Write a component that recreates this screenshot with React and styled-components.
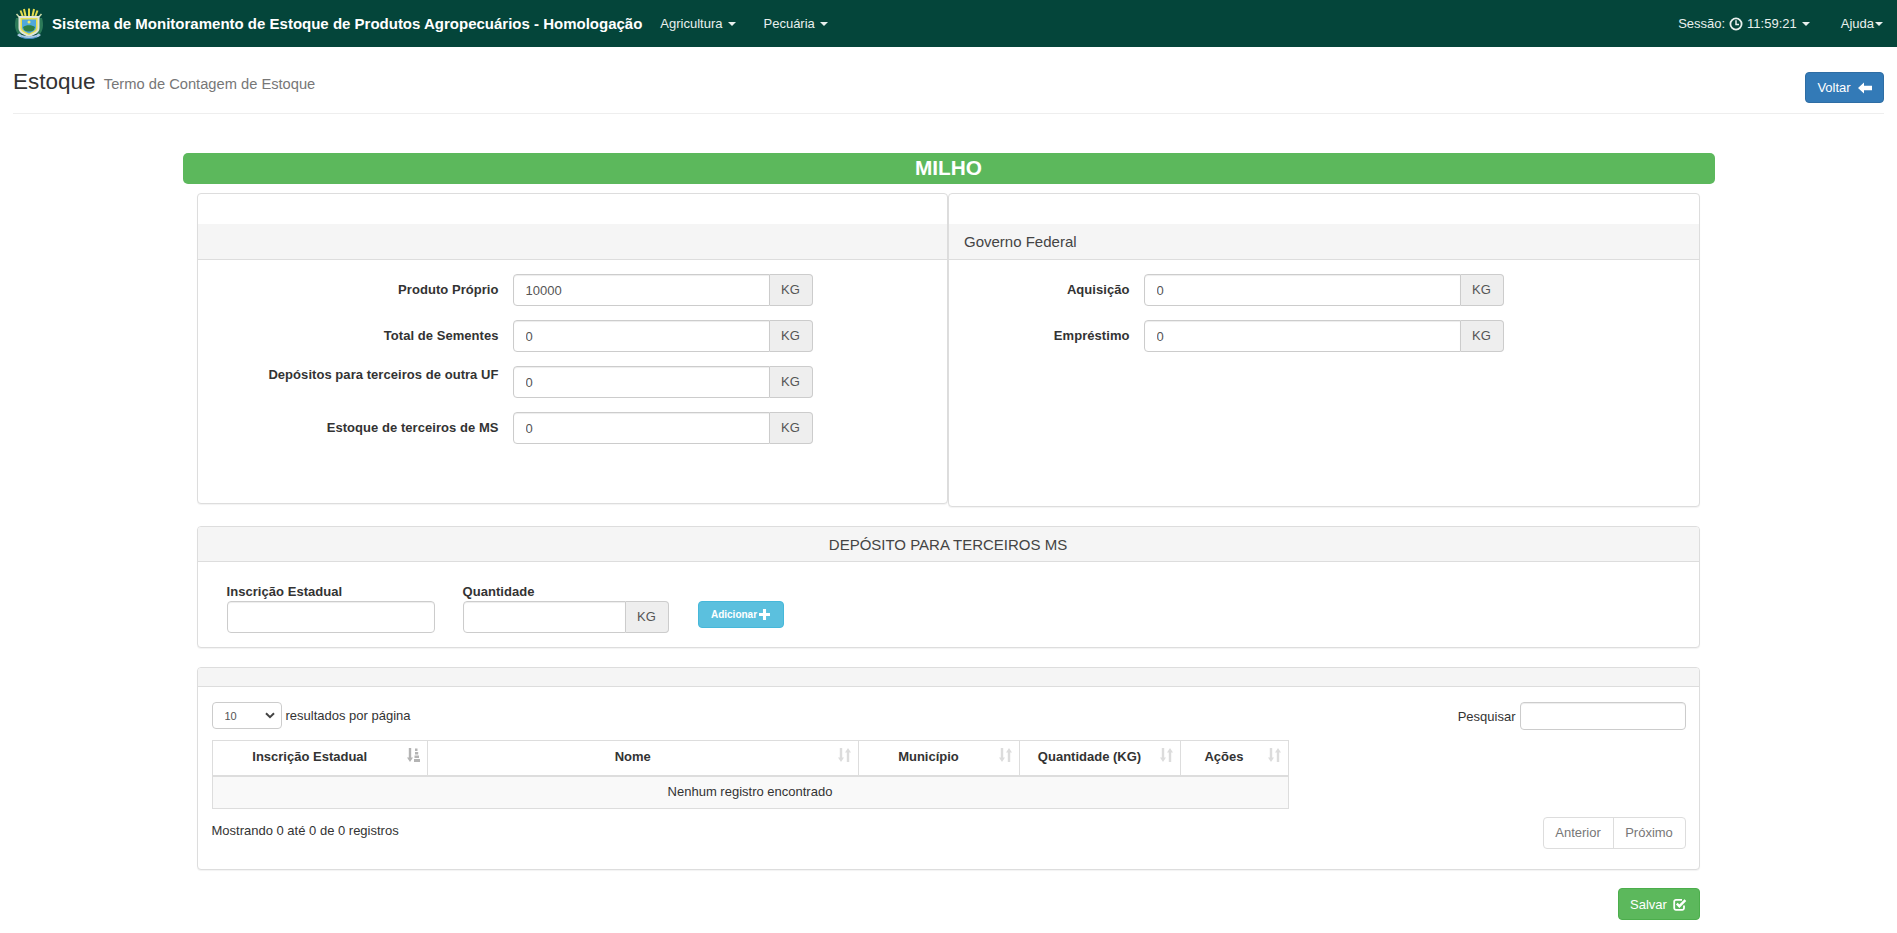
import React from 'react';
import styled, { createGlobalStyle } from 'styled-components';

const GlobalStyle = createGlobalStyle`
  html, body {
    margin: 0;
    padding: 0;
    background: #fff;
  }
  body {
    font-family: "Liberation Sans", Arial, sans-serif;
    font-size: 13px;
    color: #333;
  }
  * {
    box-sizing: border-box;
  }
`;

const Navbar = styled.nav`
  display: flex;
  align-items: center;
  height: 47px;
  padding: 0 14px 0 14px;
  background: #04453a;
  color: #fff;
`;

const Brand = styled.div`
  margin-left: 8px;
  font-size: 15px;
  font-weight: 700;
  white-space: nowrap;
`;

const NavItem = styled.div`
  display: flex;
  align-items: center;
  gap: ${props => props.$gap ?? 4}px;
  margin-left: ${props => props.$left || 0}px;
  font-size: 13px;
  color: #e9f0ee;
  white-space: nowrap;
`;

const Caret = styled.span`
  display: inline-block;
  width: 0;
  height: 0;
  margin-left: 1px;
  border-top: 4px solid currentColor;
  border-left: 4px solid transparent;
  border-right: 4px solid transparent;
`;

const NavRight = styled.div`
  display: flex;
  align-items: center;
  margin-left: auto;
`;

const PageHeader = styled.header`
  display: flex;
  justify-content: space-between;
  margin: 0 13px;
  height: 67px;
  padding-top: 25px;
  border-bottom: 1px solid #eee;
`;

const Title = styled.h1`
  margin: -3px 0 0;
  font-size: 22.5px;
  font-weight: 400;
  line-height: 26px;
  color: #333;

  small {
    margin-left: 2px;
    font-size: 14.7px;
    color: #777;
  }
`;

const Button = styled.button`
  display: inline-flex;
  align-items: center;
  justify-content: center;
  gap: ${props => props.$gap || 6}px;
  width: ${props => props.$width}px;
  height: ${props => props.$height}px;
  padding: 0;
  border: 1px solid ${props => props.$border};
  border-radius: 4px;
  background: ${props => props.$bg};
  color: #fff;
  font-family: inherit;
  font-size: ${props => props.$size || 13}px;
  font-weight: ${props => props.$weight || 400};
`;

const Main = styled.main`
  width: 1532px;
  margin: 39px auto 0;
`;

const ProductBar = styled.div`
  height: 31px;
  border-radius: 5px;
  background: #5cb85c;
  color: #fff;
  font-size: 20.8px;
  font-weight: 700;
  line-height: 30px;
  text-align: center;
`;

const Content = styled.div`
  padding: 9px 15px 0 14px;
`;

const Columns = styled.div`
  display: grid;
  grid-template-columns: 1fr 1fr;
  align-items: start;
`;

const Panel = styled.section`
  height: ${props => (props.$height ? `${props.$height}px` : 'auto')};
  margin-bottom: ${props => props.$bottom || 0}px;
  border: 1px solid #ddd;
  border-radius: 4px;
  background: #fff;
  box-shadow: 0 1px 1px rgba(0, 0, 0, 0.05);
  overflow: hidden;
`;

const PanelSpacer = styled.div`
  height: 30px;
`;

const PanelHeading = styled.div`
  height: ${props => props.$height}px;
  padding: 0 15px;
  border-bottom: 1px solid #ddd;
  background: #f5f5f5;
  font-size: 15px;
  line-height: ${props => props.$height}px;
  text-align: ${props => props.$align || 'left'};
  color: #444;
`;

const FormBody = styled.div`
  padding-top: 14px;
`;

const FormRow = styled.div`
  display: grid;
  grid-template-columns: ${props => props.$labelWidth}px ${props => props.$fieldWidth}px;
  column-gap: 14px;
  align-items: center;
  margin-bottom: 14px;
`;

const RowLabel = styled.label`
  padding-top: ${props => (props.$top ? 1 : 0)}px;
  padding-bottom: ${props => (props.$top ? 0 : 2)}px;
  align-self: ${props => (props.$top ? 'start' : 'center')};
  font-size: 13px;
  font-weight: 700;
  letter-spacing: 0.05px;
  text-align: right;
`;

const InputGroup = styled.div`
  display: flex;
  height: ${props => props.$height || 32}px;
`;

const TextInput = styled.input`
  flex: 1;
  width: 100%;
  min-width: 0;
  height: ${props => props.$height || 32}px;
  padding: 0 12px;
  border: 1px solid #ccc;
  border-radius: ${props => (props.$joined ? '4px 0 0 4px' : '4px')};
  box-shadow: inset 0 1px 1px rgba(0, 0, 0, 0.075);
  background: #fff;
  color: #555;
  font-family: inherit;
  font-size: 13px;
`;

const Addon = styled.span`
  flex: 0 0 43px;
  border: 1px solid #ccc;
  border-left: 0;
  border-radius: 0 4px 4px 0;
  background: #eee;
  color: #555;
  font-size: 13px;
  line-height: 29px;
  text-align: center;
`;

const StockForm = styled.div`
  display: flex;
  align-items: flex-start;
  padding: 21px 0 14px 29px;
`;

const StackField = styled.div`
  width: ${props => props.$width}px;
  margin-right: ${props => props.$right || 0}px;
`;

const StackLabel = styled.label`
  display: block;
  height: 18px;
  font-size: 13px;
  font-weight: 700;
  letter-spacing: 0.05px;
  line-height: 17px;
`;

const AddWrap = styled.div`
  padding-top: 18px;
`;

const TableBody = styled.div`
  padding: 15px 13px 20px 14px;
`;

const TableTop = styled.div`
  display: flex;
  justify-content: space-between;
  align-items: flex-start;
  height: 38px;
`;

const LengthControl = styled.div`
  display: flex;
  align-items: center;
  gap: 4px;
  height: 27px;
  color: #333;
`;

const SelectWrap = styled.div`
  position: relative;
  display: flex;
`;

const LengthSelect = styled.select`
  width: 70px;
  height: 27px;
  padding: 0 6px 0 12px;
  border: 1px solid #ccc;
  border-radius: 4px;
  appearance: none;
  background: #fff;
  color: #555;
  font-family: inherit;
  font-size: 11px;
`;

const SelectChevron = styled.span`
  position: absolute;
  top: 10px;
  right: 7px;
  display: flex;
  color: #444;
  pointer-events: none;
`;

const SearchControl = styled.div`
  display: flex;
  align-items: center;
  gap: 4px;
`;

const SearchInput = styled(TextInput)`
  flex: none;
  width: 166px;
  height: 28px;
`;

const Table = styled.table`
  width: 1076px;
  table-layout: fixed;
  border-collapse: collapse;
  font-size: 13px;
`;

const HeadCell = styled.th`
  position: relative;
  width: ${props => props.$width}px;
  height: 35px;
  padding: 0 28px 3px 8px;
  border: 1px solid #ddd;
  border-bottom: 2px solid #ddd;
  color: #333;
  font-weight: 700;
  text-align: center;
`;

const SortMark = styled.span`
  position: absolute;
  top: 7px;
  right: 7px;
  display: flex;
  color: ${props => (props.$active ? '#b4b4b4' : '#dcdcdc')};
`;

const EmptyCell = styled.td`
  height: 33px;
  padding: 0 0 1px;
  border: 1px solid #ddd;
  background: #f9f9f9;
  text-align: center;
`;

const TableFoot = styled.div`
  display: flex;
  justify-content: space-between;
  align-items: flex-start;
  margin-top: 8px;
`;

const Info = styled.div`
  padding-top: 6px;
`;

const Pager = styled.div`
  display: flex;
  height: 32px;
  border: 1px solid #ddd;
  border-radius: 4px;
  background: #fff;
  color: #777;
  font-size: 13px;
  line-height: 30px;
`;

const PagerItem = styled.span`
  width: ${props => props.$width}px;
  text-align: center;
  & + & {
    border-left: 1px solid #ddd;
  }
`;

const Actions = styled.div`
  display: flex;
  justify-content: flex-end;
  margin-top: 18px;
`;

const Crest = () => (
  <svg width="30" height="32" viewBox="0 0 30 32">
    <g stroke="#e6de4e" strokeWidth="2">
      <path d="M15 8 L15 0.5" />
      <path d="M11.5 8 L10 1" />
      <path d="M18.5 8 L20 1" />
      <path d="M9 9 L6.5 2.5" />
      <path d="M21 9 L23.5 2.5" />
    </g>
    <g stroke="#c8d8a8" strokeWidth="1.6">
      <path d="M7 11 L2.5 6" />
      <path d="M23 11 L27.5 6" />
    </g>
    <path d="M2 10 C0 17 1 23 5 27 L8 25 C5 21 4.5 16 5.5 10 Z" fill="#2c7a58" />
    <path d="M28 10 C30 17 29 23 25 27 L22 25 C25 21 25.5 16 24.5 10 Z" fill="#2c7a58" />
    <path d="M4.5 8 H25.5 V20 C25.5 25 20 27 15 29 C10 27 4.5 25 4.5 20 Z" fill="#dfe6d8" />
    <path d="M6.5 10 H23.5 V20 C23.5 23.5 19 25 15 27 C11 25 6.5 23.5 6.5 20 Z" fill="#e6de4e" />
    <path d="M8 11.5 H22 V19.5 C22 22.5 18.5 24 15 25.5 C11.5 24 8 22.5 8 19.5 Z" fill="#4fa8dc" />
    <path d="M9 19 C12 16.5 18 16.5 21 19 L20 22 C17 24 13 24 10 22 Z" fill="#2f7f46" />
    <circle cx="15" cy="14" r="1.5" fill="#f2ea6a" />
    <path d="M3 27 C8 32 22 32 27 27 L24.5 25.5 C20 29 10 29 5.5 25.5 Z" fill="#a9c9e4" />
    <path d="M7 29 C11 31 19 31 23 29" fill="none" stroke="#3f86c0" strokeWidth="1" />
  </svg>
);

const ClockIcon = () => (
  <svg width="14" height="14" viewBox="0 0 14 14" fill="none" stroke="currentColor">
    <circle cx="7" cy="7" r="5.6" strokeWidth="1.8" />
    <path d="M7 3.2 V7.4 H10" strokeWidth="1.5" />
  </svg>
);

const ArrowLeftIcon = () => (
  <svg width="14" height="12" viewBox="0 0 14 12" fill="currentColor">
    <path d="M0 6 L6 0.5 V3.7 H14 V8.3 H6 V11.5 Z" />
  </svg>
);

const PlusIcon = () => (
  <svg width="11" height="11" viewBox="0 0 10 10" fill="currentColor">
    <path d="M3.6 0 H6.4 V3.6 H10 V6.4 H6.4 V10 H3.6 V6.4 H0 V3.6 H3.6 Z" />
  </svg>
);

const CheckSquareIcon = () => (
  <svg width="14" height="13" viewBox="0 0 14 13" fill="none" stroke="currentColor">
    <path d="M11 7.5 V10 A1.8 1.8 0 0 1 9.2 11.8 H3 A1.8 1.8 0 0 1 1.2 10 V3.6 A1.8 1.8 0 0 1 3 1.8 H9" strokeWidth="1.8" />
    <path d="M3.8 5.6 L6.4 8.2 L12.4 2.2" strokeWidth="2.4" />
  </svg>
);

const ChevronIcon = () => (
  <svg width="10" height="7" viewBox="0 0 10 7" fill="none" stroke="currentColor" strokeWidth="2">
    <path d="M1 1.2 L5 5.2 L9 1.2" />
  </svg>
);

const SortIcon = () => (
  <svg width="13" height="14" viewBox="0 0 13 14" fill="currentColor">
    <path d="M1.8 0 H4.2 V9.5 H6 L3 14 L0 9.5 H1.8 Z" />
    <path d="M8.8 14 H11.2 V4.5 H13 L10 0 L7 4.5 H8.8 Z" />
  </svg>
);

const SortActiveIcon = () => (
  <svg width="13" height="14" viewBox="0 0 13 14" fill="currentColor">
    <path d="M1.8 0 H4.2 V9.5 H6 L3 14 L0 9.5 H1.8 Z" />
    <path d="M8 0.5 H10.5 V3 H8 Z M8 4 H11.2 V6.5 H8 Z M7.5 7.5 H12 V10 H7.5 Z M7 11 H13 V14 H7 Z" />
  </svg>
);

const StockRow = ({ label, value, labelWidth, fieldWidth, top }) => (
  <FormRow $labelWidth={labelWidth} $fieldWidth={fieldWidth}>
    <RowLabel $top={top}>{label}</RowLabel>
    <InputGroup>
      <TextInput $joined defaultValue={value} />
      <Addon>KG</Addon>
    </InputGroup>
  </FormRow>
);

const columns = [
  { title: 'Inscrição Estadual', width: 215.5, active: true },
  { title: 'Nome', width: 430.5 },
  { title: 'Município', width: 161 },
  { title: 'Quantidade (KG)', width: 161 },
  { title: 'Ações', width: 108 },
];

const App = () => (
  <>
    <GlobalStyle />
    <Navbar>
      <Crest />
      <Brand>Sistema de Monitoramento de Estoque de Produtos Agropecuários - Homologação</Brand>
      <NavItem $left={18}>Agricultura <Caret /></NavItem>
      <NavItem $left={28}>Pecuária <Caret /></NavItem>
      <NavRight>
        <NavItem>Sessão: <ClockIcon /> 11:59:21 <Caret /></NavItem>
        <NavItem $left={31} $gap={0}>Ajuda<Caret /></NavItem>
      </NavRight>
    </Navbar>

    <PageHeader>
      <Title>Estoque <small>Termo de Contagem de Estoque</small></Title>
      <Button $width={79} $height={31} $bg="#337ab7" $border="#2e6da4" $gap={7}>
        Voltar <ArrowLeftIcon />
      </Button>
    </PageHeader>

    <Main>
      <ProductBar>MILHO</ProductBar>
      <Content>
        <Columns>
          <Panel $height={311}>
            <PanelSpacer />
            <PanelHeading $height={36} />
            <FormBody>
              <StockRow label="Produto Próprio" value="10000" labelWidth={301} fieldWidth={300} />
              <StockRow label="Total de Sementes" value="0" labelWidth={301} fieldWidth={300} />
              <StockRow label="Depósitos para terceiros de outra UF" value="0" labelWidth={301} fieldWidth={300} top />
              <StockRow label="Estoque de terceiros de MS" value="0" labelWidth={301} fieldWidth={300} />
            </FormBody>
          </Panel>
          <Panel $height={314} $bottom={19}>
            <PanelSpacer />
            <PanelHeading $height={36}>Governo Federal</PanelHeading>
            <FormBody>
              <StockRow label="Aquisição" value="0" labelWidth={180.5} fieldWidth={360} />
              <StockRow label="Empréstimo" value="0" labelWidth={180.5} fieldWidth={360} />
            </FormBody>
          </Panel>
        </Columns>

        <Panel $bottom={19}>
          <PanelHeading $height={35} $align="center">DEPÓSITO PARA TERCEIROS MS</PanelHeading>
          <StockForm>
            <StackField $width={208} $right={28}>
              <StackLabel>Inscrição Estadual</StackLabel>
              <TextInput />
            </StackField>
            <StackField $width={206} $right={29}>
              <StackLabel>Quantidade</StackLabel>
              <InputGroup>
                <TextInput $joined />
                <Addon>KG</Addon>
              </InputGroup>
            </StackField>
            <AddWrap>
              <Button $width={86} $height={27} $bg="#5bc0de" $border="#46b8da" $size={10} $weight={700} $gap={2}>
                Adicionar <PlusIcon />
              </Button>
            </AddWrap>
          </StockForm>
        </Panel>

        <Panel>
          <PanelHeading $height={19} />
          <TableBody>
            <TableTop>
              <LengthControl>
                <SelectWrap>
                  <LengthSelect defaultValue="10">
                    <option value="10">10</option>
                    <option value="25">25</option>
                    <option value="50">50</option>
                  </LengthSelect>
                  <SelectChevron><ChevronIcon /></SelectChevron>
                </SelectWrap>
                resultados por página
              </LengthControl>
              <SearchControl>
                Pesquisar
                <SearchInput $height={28} />
              </SearchControl>
            </TableTop>
            <Table>
              <thead>
                <tr>
                  {columns.map(col => (
                    <HeadCell key={col.title} $width={col.width}>
                      {col.title}
                      <SortMark $active={col.active}>
                        {col.active ? <SortActiveIcon /> : <SortIcon />}
                      </SortMark>
                    </HeadCell>
                  ))}
                </tr>
              </thead>
              <tbody>
                <tr>
                  <EmptyCell colSpan={5}>Nenhum registro encontrado</EmptyCell>
                </tr>
              </tbody>
            </Table>
            <TableFoot>
              <Info>Mostrando 0 até 0 de 0 registros</Info>
              <Pager>
                <PagerItem $width={69}>Anterior</PagerItem>
                <PagerItem $width={72}>Próximo</PagerItem>
              </Pager>
            </TableFoot>
          </TableBody>
        </Panel>

        <Actions>
          <Button $width={82} $height={32} $bg="#5cb85c" $border="#4cae4c" $size={13} $gap={6}>
            Salvar <CheckSquareIcon />
          </Button>
        </Actions>
      </Content>
    </Main>
  </>
);

export default App;
